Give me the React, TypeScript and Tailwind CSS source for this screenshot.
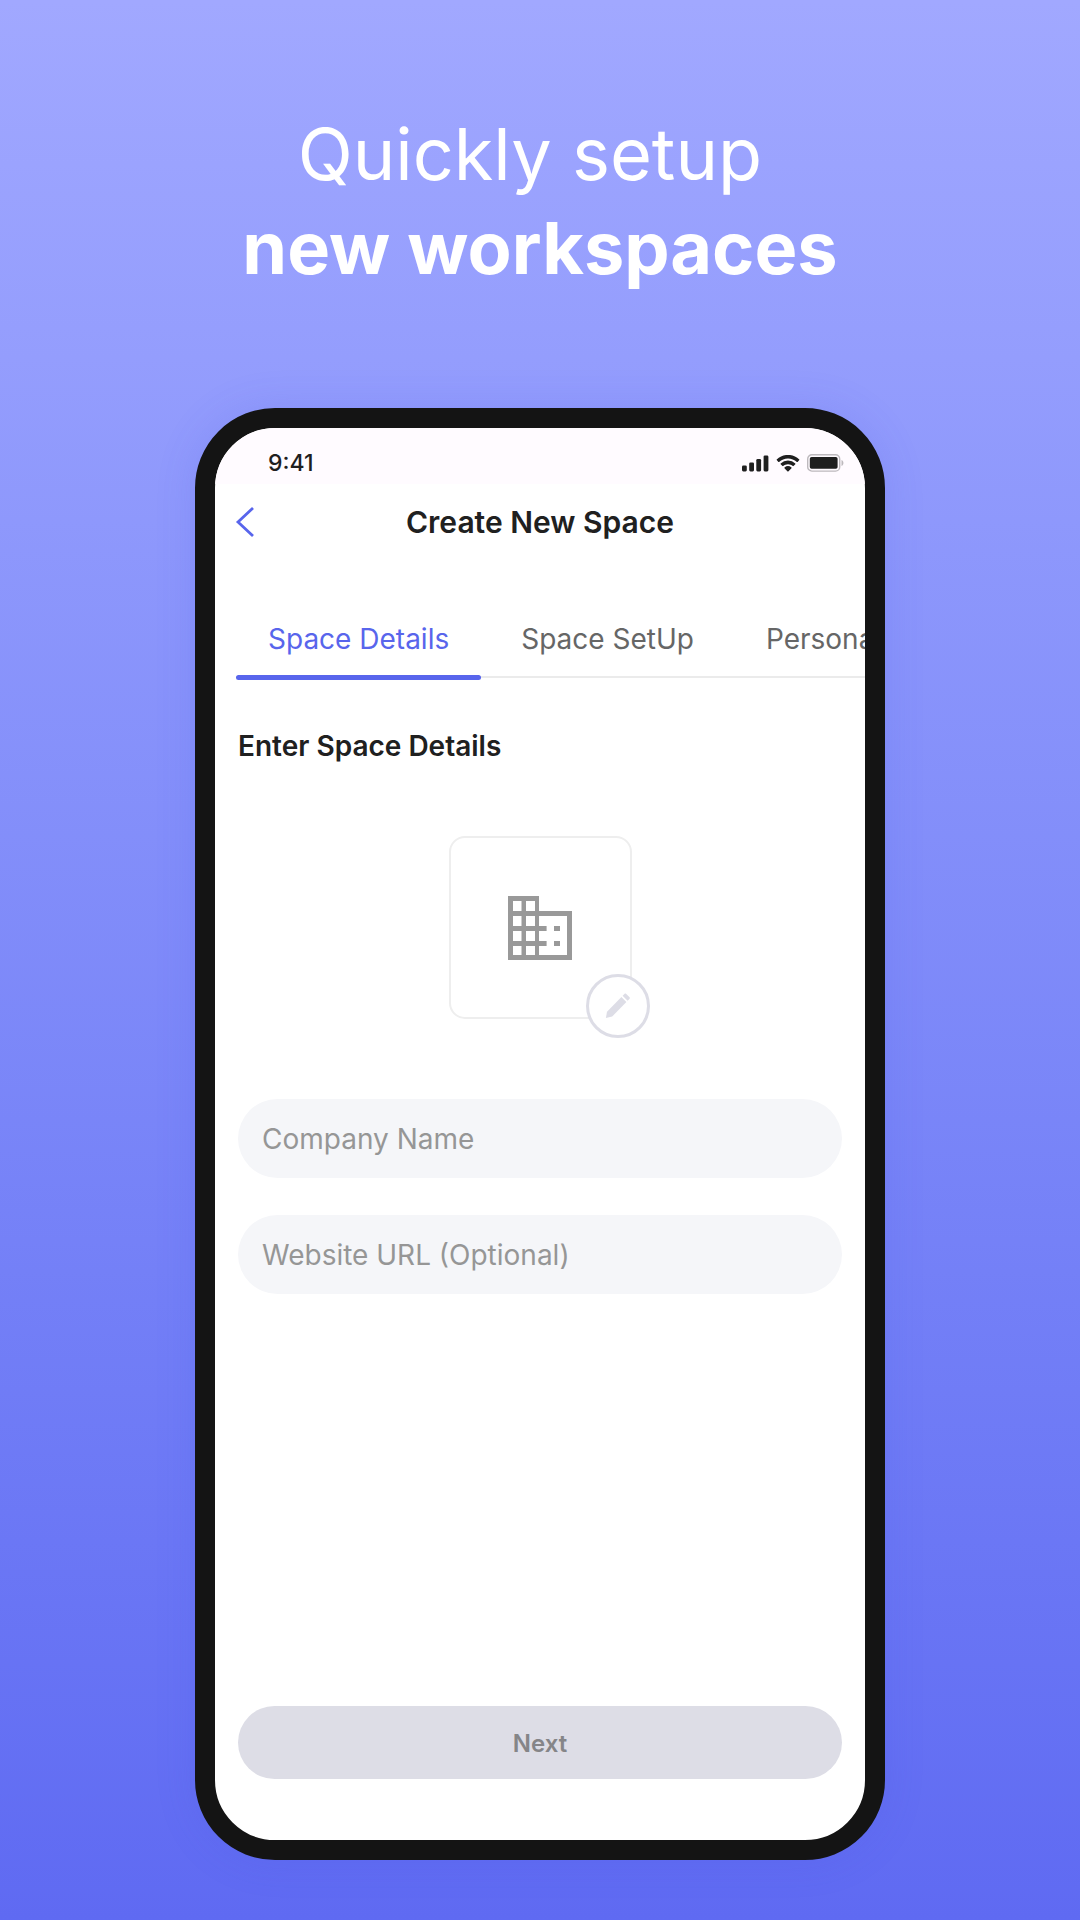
import type { ReactNode } from "react";

function SignalIcon() {
  return (
    <svg viewBox="0 0 27 17" className="h-[17px] w-[27px]" fill="#1f1f1f" aria-hidden="true">
      <rect x="0" y="10.4" width="4.8" height="6" rx="1.3" />
      <rect x="7.2" y="7.4" width="4.8" height="9" rx="1.3" />
      <rect x="14.3" y="4" width="4.8" height="12.4" rx="1.3" />
      <rect x="21.6" y="0.4" width="4.8" height="16" rx="1.3" />
    </svg>
  );
}

function WifiIcon() {
  return (
    <svg viewBox="0 0 17 12" className="h-[17px] w-[24px]" fill="#1f1f1f" aria-hidden="true">
      <path d="M8.5 2.4c2.3 0 4.6.9 6.3 2.5.1.1.3.1.5 0l1.2-1.3c.1-.1.1-.3 0-.5A11.6 11.6 0 0 0 .5 3.1c-.1.2-.1.4 0 .5l1.2 1.3c.2.1.4.1.5 0A9.2 9.2 0 0 1 8.5 2.4Z" />
      <path d="M8.5 6.5c1.3 0 2.5.5 3.4 1.3.2.1.4.1.5 0l1.3-1.3c.1-.2.1-.4 0-.5a7.6 7.6 0 0 0-10.4 0c-.1.1-.1.3 0 .5l1.3 1.3c.1.1.3.1.5 0 .9-.8 2.1-1.3 3.4-1.3Z" />
      <path d="M11 9.3c.1-.1.1-.3 0-.4a3.9 3.9 0 0 0-5 0c-.1.1-.1.3 0 .4l2.2 2.3c.2.1.4.1.5 0L11 9.3Z" />
    </svg>
  );
}

function BatteryIcon() {
  return (
    <svg viewBox="0 0 37 18" className="h-[18px] w-[37px]" aria-hidden="true">
      <rect x="0.7" y="0.7" width="32" height="16.4" rx="4.2" fill="none" stroke="#bdb9bd" strokeWidth="1.4" />
      <rect x="2.8" y="3" width="27.8" height="11.8" rx="1.8" fill="#1f1f1f" />
      <path d="M34.5 6v6c2.6-1.3 2.6-4.7 0-6Z" fill="#bdb9bd" />
    </svg>
  );
}

function BuildingIcon() {
  return (
    <svg viewBox="0 0 64 64" className="size-16" fill="#999999" aria-hidden="true">
      <path
        fillRule="evenodd"
        d="M0 0h31v15h33v49H0ZM5 5v10h8.5V5ZM18 5v10h9V5ZM5 20v10h8.5V20ZM18 20v10h9V20ZM5 35v10h8.5V35ZM18 35v10h9V35ZM5 50v9h8.5v-9ZM18 50v9h9v-9ZM31 20v10h7.6v5H31v10h7.6v5H31v9h28V20ZM46 30h6v5h-6ZM46 45h6v5h-6Z"
      />
    </svg>
  );
}

function PencilIcon() {
  return (
    <svg viewBox="0 0 26 26" className="size-[26px]" fill="#dddde6" aria-hidden="true">
      <path d="M.9 24.9 2 18.8 16.4 4l5 5L7.2 23.4Z" />
      <path d="m17.6 2.7 2-2c.4-.4 1-.4 1.4 0l3.6 3.6c.4.4.4 1 0 1.4l-2 2Z" />
    </svg>
  );
}

function Tab({ selected = false, children }: { selected?: boolean; children: ReactNode }) {
  return (
    <button
      type="button"
      role="tab"
      aria-selected={selected}
      className={
        selected
          ? "relative h-full shrink-0 px-8 pt-0.5 text-[#5865ec] after:absolute after:inset-x-0 after:-bottom-1 after:h-[5px] after:rounded-full after:bg-[#5865ec]"
          : "h-full shrink-0 pt-0.5 pr-8 pl-10 text-[#666666]"
      }
    >
      {children}
    </button>
  );
}

function Field({ label }: { label: string }) {
  return (
    <input
      type="text"
      aria-label={label}
      placeholder={label}
      className="h-[79px] w-full rounded-full bg-[#f5f6f9] px-6 text-[28px] text-[#202020] outline-none placeholder:text-[#969696]"
    />
  );
}

export default function App() {
  return (
    <main className="flex min-h-screen flex-col items-center bg-linear-to-b from-[#a1a8ff] to-[#5f6af2] px-6 pt-[107px] pb-[60px] font-['Inter',sans-serif]">
      <h1 className="text-center text-[72px] leading-[94px] text-white">
        <span className="block font-normal">Quickly setup&nbsp;</span>
        <span className="block font-bold">new workspaces</span>
      </h1>

      <section className="mt-[113px] flex w-full max-w-[690px] grow flex-col overflow-hidden rounded-[80px] border-20 border-[#141414] bg-white shadow-[0_0_40px_rgba(70,80,220,0.15)]">
        <div className="flex h-14 shrink-0 items-center justify-between bg-[#fffbff] pt-3.5 pr-[21px] pl-[53px]">
          <span className="text-[23px] font-medium text-[#1f1f1f]">9:41</span>
          <div className="flex items-center gap-[7px]">
            <SignalIcon />
            <WifiIcon />
            <BatteryIcon />
          </div>
        </div>

        <header className="grid h-[76px] shrink-0 grid-cols-[48px_1fr_48px] items-center px-[18px]">
          <button type="button" aria-label="Back" className="flex h-12 items-center">
            <svg viewBox="0 0 22 32" className="h-8 w-[22px]" fill="none" stroke="#5865ec" strokeWidth="2.8" aria-hidden="true">
              <path d="M20 2 5 16l15 14" />
            </svg>
          </button>
          <h2 className="text-center text-[30px] font-semibold text-[#202020]">Create New Space</h2>
        </header>

        <div role="tablist" className="mt-10 ml-[21px] flex h-[78px] shrink-0 border-b-2 border-[#ebebeb] text-[28px]">
          <Tab selected>Space Details</Tab>
          <Tab>Space SetUp</Tab>
          <Tab>Personalize</Tab>
        </div>

        <form className="flex grow flex-col px-[23px] pb-[61px]" onSubmit={(e) => e.preventDefault()}>
          <h3 className="mt-12 text-[28px] leading-10 font-semibold text-[#202020]">Enter Space Details</h3>

          <div className="relative mt-[70px] flex size-[183px] items-center justify-center self-center rounded-2xl border-2 border-[#eeeeee]">
            <BuildingIcon />
            <button
              type="button"
              aria-label="Edit logo"
              className="absolute -right-5 -bottom-[21px] flex size-16 items-center justify-center rounded-full border-3 border-[#dddde6] bg-white"
            >
              <PencilIcon />
            </button>
          </div>

          <div className="mt-20 mb-10 flex flex-col gap-[37px]">
            <Field label="Company Name" />
            <Field label="Website URL (Optional)" />
          </div>

          <button type="submit" className="mt-auto h-[73px] w-full rounded-full bg-[#dddde6] pt-0.5 text-[24px] font-semibold text-[#858588]">
            Next
          </button>
        </form>
      </section>
    </main>
  );
}
